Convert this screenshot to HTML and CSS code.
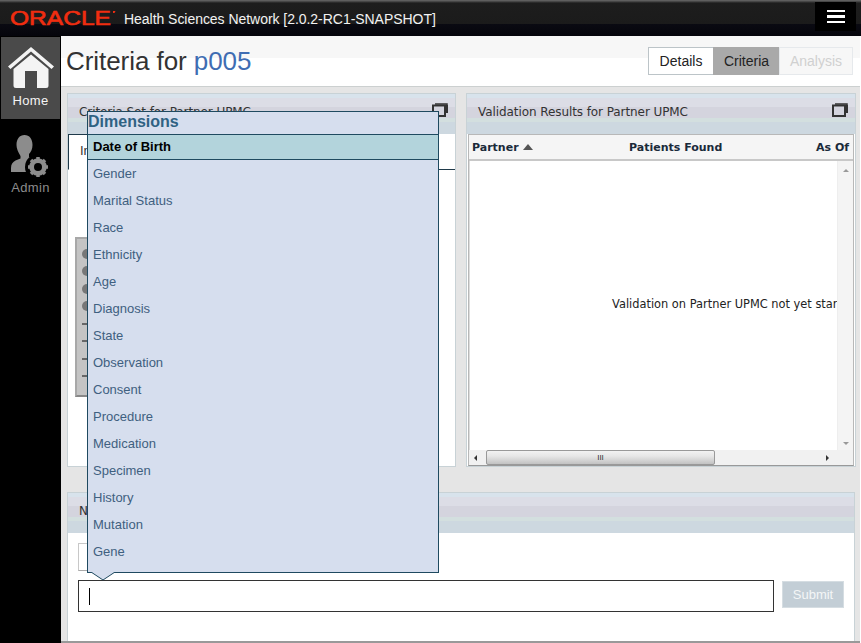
FILE: index.html
```html
<!DOCTYPE html>
<html lang="en">
<head>
<meta charset="utf-8">
<title>Health Sciences Network</title>
<link rel="stylesheet" href="styles.css">
</head>
<body>
<div class="app">
  <header class="topbar">
    <svg class="logo" width="106" height="18" viewBox="0 0 106 18"><text x="0" y="15.500" textLength="101" lengthAdjust="spacingAndGlyphs" class="logo-text">ORACLE</text><path d="M103 2h2.500l-1 2H103z" fill="#f02d10"/></svg>
    <span class="product">Health Sciences Network [2.0.2-RC1-SNAPSHOT]</span>
    <button class="menu-btn" aria-label="Menu"><i></i><i></i><i></i></button>
  </header>
  <div class="shell">
    <nav class="sidebar">
      <a class="nav-item active">
        <svg width="46" height="42" viewBox="0 0 46 42"><path d="M0 19.500 23 0l23 19.500-2.500 2.500L23 4.500 2.500 22z" fill="#f4f4f4"/><path d="M5.500 22 23 7.500 40.500 22v16.500a2.500 2.500 0 0 1-2.500 2.500H29V24H17v17H8a2.500 2.500 0 0 1-2.500-2.500z" fill="#f4f4f4"/></svg>
        <span>Home</span>
      </a>
      <a class="nav-item">
        <svg width="40" height="42" viewBox="0 0 40 42"><path d="M13.500 0c5 0 8 4 8 10 0 4-1.500 7-3.500 9v3l7 3v12H0v-4c0-4 2-6 4.500-7.500l5-2v-2.500C7 16.500 5.500 13.500 5.500 10c0-6 3-10 8-10z" fill="#8c8c8c"/><circle cx="27" cy="32" r="13" fill="#000"/><g fill="none" stroke="#8c8c8c"><circle cx="27" cy="32" r="6.500" stroke-width="4.500"/><path d="M27 22v20M17 32h20M20 25l14 14M34 25 20 39" stroke-width="3.500"/></g><circle cx="27" cy="32" r="4" fill="#000"/></svg>
        <span>Admin</span>
      </a>
    </nav>
    <main class="content">
      <div class="titlebar">
        <h1 class="page-title">Criteria for <span class="study">p005</span></h1>
        <div class="tabs">
          <button class="tab">Details</button>
          <button class="tab current">Criteria</button>
          <button class="tab disabled">Analysis</button>
        </div>
      </div>
      <div class="workspace">
        <div class="panels">
          <section class="panel">
            <div class="panel-head"><span>Criteria Set for Partner UPMC</span><svg class="expand" width="16" height="14" viewBox="0 0 16 14"><path d="M3 1h12v9" fill="none" stroke="#333" stroke-width="1.500"/><path d="M14 2h2v8h-2z" fill="#333"/><rect x="1" y="2.500" width="12" height="10.500" fill="none" stroke="#333" stroke-width="2"/></svg></div>
            <div class="panel-body criteria-body">
              <div class="subtab-bar"><div class="subtab">Inclusion</div></div>
              <div class="query-box">
                <div class="q-row"><i class="dot"></i></div>
                <div class="q-row"><i class="dot"></i></div>
                <div class="q-row"><i class="dot"></i></div>
                <div class="q-row"><i class="dot"></i></div>
                <div class="q-row"><i class="dash"></i></div>
                <div class="q-row"><i class="dash"></i></div>
                <div class="q-row"><i class="dash"></i></div>
                <div class="q-row"><i class="dash"></i></div>
              </div>
            </div>
          </section>
          <section class="panel">
            <div class="panel-head"><span>Validation Results for Partner UPMC</span><svg class="expand" width="16" height="14" viewBox="0 0 16 14"><path d="M3 1h12v9" fill="none" stroke="#333" stroke-width="1.500"/><path d="M14 2h2v8h-2z" fill="#333"/><rect x="1" y="2.500" width="12" height="10.500" fill="none" stroke="#333" stroke-width="2"/></svg></div>
            <div class="panel-body grid-body">
              <div class="grid-head">
                <div class="col col-partner">Partner <i class="sort"></i></div>
                <div class="col col-found">Patients Found</div>
                <div class="col col-asof">As Of</div>
              </div>
              <div class="grid-main">
                <div class="grid-view"><p class="grid-empty">Validation on Partner UPMC not yet started</p></div>
                <div class="vscroll"><i class="up"></i><i class="down"></i></div>
              </div>
              <div class="hscroll">
                <i class="left"></i>
                <div class="hthumb"><b>III</b></div>
                <i class="right"></i>
              </div>
            </div>
          </section>
        </div>
        <section class="panel notes">
          <div class="panel-head"><span>Notes</span></div>
          <div class="notes-body">
            <div class="note-chip"></div>
            <div class="note-row">
              <div class="note-input"><i class="caret"></i></div>
              <button class="submit">Submit</button>
            </div>
          </div>
        </section>
      </div>
    </main>
  </div>
  <div class="popup">
    <div class="popup-title">Dimensions</div>
    <ul class="popup-list">
      <li class="selected">Date of Birth</li>
      <li>Gender</li>
      <li>Marital Status</li>
      <li>Race</li>
      <li>Ethnicity</li>
      <li>Age</li>
      <li>Diagnosis</li>
      <li>State</li>
      <li>Observation</li>
      <li>Consent</li>
      <li>Procedure</li>
      <li>Medication</li>
      <li>Specimen</li>
      <li>History</li>
      <li>Mutation</li>
      <li>Gene</li>
    </ul>
    <svg class="popup-arrow" width="24" height="9" viewBox="0 0 24 9"><path d="M0 0 12 8 24 0" fill="#d6deee" stroke="#1f4a60"/></svg>
  </div>
</div>
</body>
</html>
```
FILE: styles.css
```css
* { box-sizing: border-box; }
html, body { margin: 0; padding: 0; height: 100%; overflow: hidden; background: #fff; }
body { font-family: "Liberation Sans", Arial, sans-serif; }
.app { position: relative; width: 861px; height: 643px; overflow: hidden; display: flex; flex-direction: column; }

.topbar {
  height: 36px; flex: none; display: flex; align-items: center; padding: 0 5px 0 10px;
  background: linear-gradient(#6a6a6a 0, #3a3a3a 2px, #1d1d1d 3px, #1b1b1b 24px, #0a0a12 24px, #05050c 36px);
}
.logo { flex: none; margin-top: 0; }
.logo-text { font: 20px "Liberation Sans", sans-serif; fill: #f02d10; stroke: #f02d10; stroke-width: 0.6px; }
.product { margin-left: 8px; color: #f2f2f2; font-size: 14px; letter-spacing: -0.04px; white-space: nowrap; margin-top: 1px; }
.menu-btn { margin-left: auto; width: 41px; height: 29px; margin-top: -3px; background: #000; border: 0; padding: 0; display: flex; flex-direction: column; align-items: center; justify-content: center; gap: 3px; }
.menu-btn i { display: block; width: 18px; height: 2.500px; background: #fff; }

.shell { flex: 1; min-height: 0; display: flex; }
.sidebar { width: 61px; flex: none; background: #000; display: flex; flex-direction: column; }
.nav-item { height: 83px; padding: 11px 1px 0 1px; display: flex; flex-direction: column; align-items: center; color: #8c8c8c; font-size: 13px; letter-spacing: 0.3px; }
.nav-item span { margin-top: 4px; }
.nav-item.active { background: #4a4a4a; color: #f4f4f4; height: 82px; margin: 1px 1px 0 1px; padding: 10px 0 0; }
.nav-item svg { flex: none; }
.nav-item:nth-child(2) { padding-top: 16px; }
.nav-item:nth-child(2) span { margin-top: 3px; }

.content { flex: 1; min-width: 0; display: flex; flex-direction: column; background: #e5e5e5; border-right: 1px solid #fff; }
.titlebar {
  height: 51px; flex: none; display: flex; align-items: center; justify-content: space-between; padding: 0 7px 0 5px;
  background: linear-gradient(#f7f7f7 22px, #fff 22px); border-bottom: 1px solid #ccd0d0;
}
.page-title { margin: 0; font-size: 26px; font-weight: normal; color: #333; line-height: 30px; margin-top: 0; letter-spacing: -0.06px; }
.study { color: #3f6db3; }
.tabs { display: flex; height: 28px; margin-top: -1px; }
.tab { font: 14px "Liberation Sans", sans-serif; padding: 0; color: #222; background: #fff; border: 1px solid #bcc4c8; border-right: 0; width: 65px; }
.tab.current { background: #a9a9a9; border-color: #a9a9a9; width: 66px; }
.tab.disabled { background: #f7f7f7; color: #d0d0d0; border: 1px solid #e6e9ec; width: 74px; }

.workspace { flex: 1; min-height: 0; padding: 6px 3px 0 6px; display: flex; flex-direction: column; gap: 25px; border-bottom: 2px solid #999; }
.panels { display: grid; grid-template-columns: 389px 390px; gap: 10px; height: 374px; flex: none; }
.panel { background: #fff; border: 1px solid #c8d2d6; display: flex; flex-direction: column; min-height: 0; }
.panel-head {
  height: 40px; flex: none; display: flex; align-items: center; justify-content: space-between; padding: 0 7px 5px 11px;
  font: 12px "DejaVu Sans", sans-serif; color: #333; letter-spacing: -0.08px;
  background: linear-gradient(#d8e3ec 4px, #dcdde6 4px, #dcdde6 13px, #d4d4de 13px, #d4d4de 24px, #d3dfdf 24px, #d3dfdf 28px, #cdd8e0 28px);
}
.expand { flex: none; margin-top: -3px; margin-right: 0; }
.panel-body { flex: 1; min-height: 0; position: relative; }

.subtab-bar { height: 36px; border-bottom: 1px solid #1f3a4a; }
.subtab { height: 36px; width: 120px; border: 1px solid #1f3a4a; border-bottom-color: #fff; background: #fff; font-size: 13px; padding: 8px 0 0 11px; color: #333; }
.query-box { margin: 67px 0 0 7px; width: 300px; height: 160px; background: #c4c4c4; border: 2px solid #a8a8a8; border-bottom-color: #888; padding: 6px 0 0 5px; }
.q-row { height: 17.500px; display: flex; align-items: center; }
.dot { width: 10px; height: 10px; border-radius: 50%; background: #777; display: block; }
.dash { width: 10px; height: 2px; background: #666; display: block; }

.grid-body { margin: 0 1px 0 1px; display: flex; flex-direction: column; border: 1px solid #b8b8b8; border-bottom-color: #999; }
.grid-head { height: 26px; flex: none; display: flex; background: #f5f5f5; border-bottom: 2px solid #c8c8c8; font: bold 11px "DejaVu Sans", sans-serif; color: #1a2a3a; overflow: hidden; }
.col { padding: 6px 0 0 3px; white-space: nowrap; }
.col-partner { width: 157px; }
.col-found { width: 187px; }
.col-asof { flex: 1; }
.sort { display: inline-block; width: 0; height: 0; border: 5px solid transparent; border-top: 0; border-bottom: 6px solid #555; margin-left: 1px; vertical-align: 1px; }
.grid-main { flex: 1; min-height: 0; display: flex; }
.grid-view { flex: 1; min-width: 0; overflow: hidden; display: flex; align-items: center; border-left: 1px solid #ddd; }
.grid-empty { margin: -4px 0 0 142px; font: 11.400px "DejaVu Sans", sans-serif; color: #222; white-space: nowrap; }
.vscroll { width: 16px; flex: none; background: #f4f4f4; border-left: 1px solid #eee; display: flex; flex-direction: column; justify-content: space-between; align-items: center; padding: 8px 0 5px; }
.up { width: 0; height: 0; border: 3px solid transparent; border-top: 0; border-bottom: 3px solid #999; }
.down { width: 0; height: 0; border: 3px solid transparent; border-bottom: 0; border-top: 3px solid #999; }
.hscroll { height: 15px; flex: none; display: flex; align-items: center; background: #f1f1f1; padding-right: 24px; }
.left { width: 0; height: 0; border: 3px solid transparent; border-left: 0; border-right: 3px solid #333; margin: 0 9px 0 5px; }
.right { width: 0; height: 0; border: 3px solid transparent; border-right: 0; border-left: 3px solid #333; margin-left: auto; }
.hthumb { width: 229px; height: 15px; border: 1px solid #999; border-radius: 2px; background: linear-gradient(#f2f2f2, #e6e6e6 40%, #c2c2c2); font: 8px "Liberation Sans", sans-serif; color: #333; display: flex; align-items: center; justify-content: center; }
.hthumb b { font-weight: normal; }

.notes { flex: 1; min-height: 0; width: 788px; border-bottom: 0; }
.notes-body { flex: 1; padding: 10px 10px 0 10px; }
.note-chip { width: 100px; height: 28px; border: 1px solid #c8c8c8; border-bottom-color: #aaa; }
.note-row { margin-top: 9px; display: flex; align-items: center; gap: 8px; }
.note-input { flex: 1; height: 32px; border: 1px solid #333; padding: 7px 0 0 10px; background: #fff; }
.caret { display: block; width: 1px; height: 17px; background: #000; }
.submit { width: 62px; height: 27px; flex: none; background: #c3ced6; border: 1px solid #d5dde2; color: #f4f6f7; font: 13px "Liberation Sans", sans-serif; padding: 0; margin-top: -3px; }

.popup { position: absolute; left: 87px; top: 111px; width: 352px; height: 462px; background: #d6deee; border: 1px solid #1f4a60; }
.popup-title { height: 22px; padding: 0; font-size: 16px; font-weight: bold; color: #2f6283; line-height: 19px; }
.popup-list { list-style: none; margin: 0; padding: 0; }
.popup-list li { height: 27px; line-height: 27px; padding-left: 5px; font-size: 13px; color: #3f6080; }
.popup-list li.selected { height: 26px; line-height: 24px; font-weight: bold; color: #000; background: #b3d4dc; border-top: 1px solid #1f4a60; border-bottom: 1px solid #1f4a60; }
.popup-arrow { position: absolute; left: 3px; bottom: -9px; display: block; }
```
